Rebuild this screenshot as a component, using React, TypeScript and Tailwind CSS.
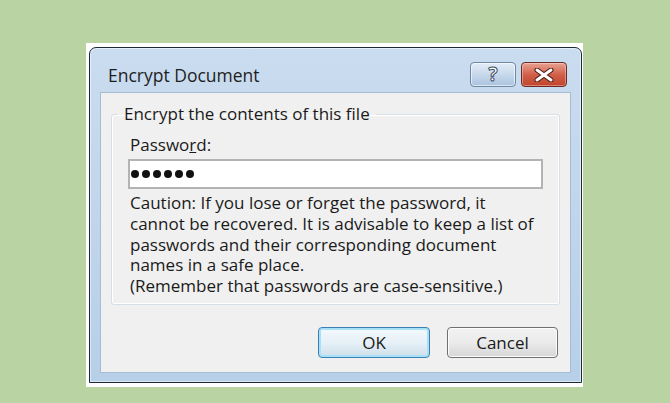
import React from "react";

const font = { fontFamily: '"Open Sans", "Noto Sans", sans-serif' };

function HelpButton() {
  return (
    <button className="flex h-[25px] w-[46px] items-center justify-center rounded-[4px] border border-[#6f88a3] bg-gradient-to-b from-[#e2ecf7] via-[#c8d9ec] to-[#a9c2de] shadow-[inset_0_0_0_1px_rgba(255,255,255,0.6)]">
      <span
        className="text-[19px] font-bold leading-none text-white"
        style={{ ...font, WebkitTextStroke: "1px #3a4a5c" }}
      >
        ?
      </span>
    </button>
  );
}

function CloseButton() {
  return (
    <button className="flex h-[25px] w-[46px] items-center justify-center rounded-[4px] border border-[#6e2b22] bg-gradient-to-b from-[#e8a292] via-[#d2604b] to-[#c0432c] shadow-[inset_0_0_0_1px_rgba(255,255,255,0.35)]">
      <svg width="20" height="14" viewBox="0 0 20 14">
        <path
          d="M3 2 L17 12 M17 2 L3 12"
          stroke="#4a1a14"
          strokeWidth="5"
          strokeLinecap="round"
        />
        <path
          d="M3 2 L17 12 M17 2 L3 12"
          stroke="#ffffff"
          strokeWidth="3"
          strokeLinecap="round"
        />
      </svg>
    </button>
  );
}

function DialogButton({ label, focused }: { label: string; focused?: boolean }) {
  return (
    <button
      className={
        focused
          ? "h-[31px] w-[112px] rounded-[4px] border border-[#3c7fb1] bg-gradient-to-b from-[#f4f9fc] via-[#e6f0f7] to-[#cfdfea] text-[17px] text-[#1a1a1a] shadow-[inset_0_0_0_2px_#a8e0f8]"
          : "h-[31px] w-[111px] rounded-[4px] border border-[#707070] bg-gradient-to-b from-[#f2f2f2] via-[#ebebeb] to-[#d6d6d6] text-[17px] text-[#1a1a1a] shadow-[inset_0_0_0_1px_#fcfcfc]"
      }
      style={font}
    >
      {label}
    </button>
  );
}

export default function App() {
  return (
    <div className="h-[403px] w-[670px] overflow-hidden bg-[#b9d3a3] pl-[86px] pt-[43px]">
      <div className="h-[344px] w-[497px] bg-white pl-[3px] pt-[4px]">
        {/* Window */}
        <div className="flex h-[336px] w-[493px] flex-col rounded-t-[7px] border border-[#1c2b33] bg-gradient-to-b from-[#cadcef] to-[#b7cfe8] shadow-[inset_0_0_0_1px_rgba(255,255,255,0.5)]">
          {/* Title bar */}
          <div className="flex h-[44px] shrink-0 items-start justify-between pl-[18px] pr-[14px]">
            <span
              className="mt-[19px] text-[17.5px] leading-none text-[#1e1e1e]"
              style={font}
            >
              Encrypt Document
            </span>
            <div className="mt-[14px] flex gap-[5px]">
              <HelpButton />
              <CloseButton />
            </div>
          </div>

          {/* Client area */}
          <div className="mx-[10px] mb-[9px] flex flex-1 flex-col border border-[#a6bcd4] bg-[#f0f0f0] px-[10px] pt-[11px]" style={font}>
            <fieldset className="h-[201px] rounded-[3px] border border-[#d5dfe5] px-[16px] shadow-[inset_0_0_0_1px_#ffffff]">
              <legend className="ml-[-10px] px-[6px] text-[17px] leading-[20px] text-[#1a1a1a]">
                Encrypt the contents of this file
              </legend>
              <div className="mt-[11px] pl-[2px] text-[17px] leading-[20px] text-[#1a1a1a]">
                Passwo<span className="underline">r</span>d:
              </div>
              <div className="mt-[4px] flex h-[30px] items-center gap-[3px] border-2 border-[#b3b3b3] bg-white pl-[1px]">
                {[0, 1, 2, 3, 4, 5].map((i) => (
                  <span key={i} className="h-[8px] w-[8px] rounded-full bg-[#111111]" />
                ))}
              </div>
              <p className="mt-[4px] pl-[2px] text-[17px] leading-[20.8px] text-[#1a1a1a]">
                Caution: If you lose or forget the password, it
                <br />
                cannot be recovered. It is advisable to keep a list of
                <br />
                passwords and their corresponding document
                <br />
                names in a safe place.
                <br />
                (Remember that passwords are case-sensitive.)
              </p>
            </fieldset>

            <div className="mt-[22px] flex justify-end gap-[17px] pr-[2px]">
              <DialogButton label="OK" focused />
              <DialogButton label="Cancel" />
            </div>
          </div>
        </div>
      </div>
    </div>
  );
}
